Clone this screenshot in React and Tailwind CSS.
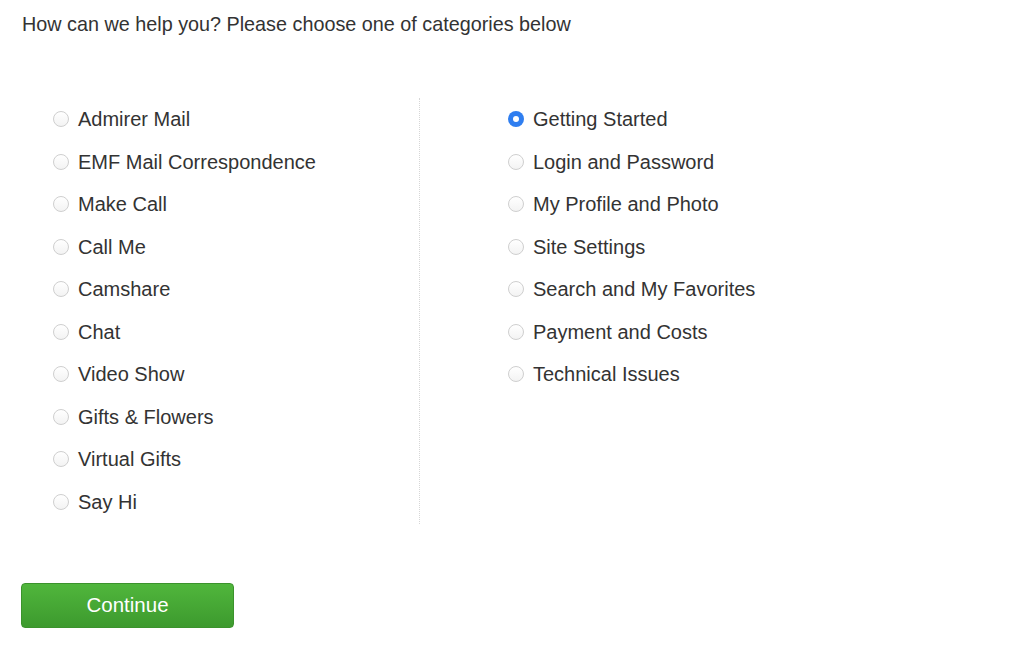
import React from "react";

const left = ["Admirer Mail","EMF Mail Correspondence","Make Call","Call Me","Camshare","Chat","Video Show","Gifts & Flowers","Virtual Gifts","Say Hi"];
const right = ["Getting Started","Login and Password","My Profile and Photo","Site Settings","Search and My Favorites","Payment and Costs","Technical Issues"];

function Radio({ checked }) {
  return checked ? (
    <span className="w-4 h-4 rounded-full bg-[#2f7ef0] flex items-center justify-center shrink-0">
      <span className="w-[6px] h-[6px] rounded-full bg-white" />
    </span>
  ) : (
    <span className="w-4 h-4 rounded-full border border-[#cfcfcf] bg-gradient-to-b from-white to-[#f3f3f3] shrink-0" />
  );
}

function Item({ label, checked }) {
  return (
    <div className="h-[42.5px] flex items-center gap-[9px]">
      <Radio checked={checked} />
      <span className="text-[20px] text-[#333]">{label}</span>
    </div>
  );
}

export default function App() {
  return (
    <div className="w-[1024px] h-[645px] bg-white pl-[22px] pt-[11px]" style={{ fontFamily: '"Liberation Sans", Arial, sans-serif' }}>
      <div className="text-[19.8px] text-[#333] leading-[26px]">How can we help you? Please choose one of categories below</div>
      <div className="flex mt-[61px]">
        <div className="w-[397px] pl-[31px]">
          {left.map((l) => <Item key={l} label={l} />)}
        </div>
        <div className="border-l border-dotted border-[#d6d6d6] h-[426px]" />
        <div className="pl-[88px]">
          {right.map((l, i) => <Item key={l} label={l} checked={i === 0} />)}
        </div>
      </div>
      <button className="mt-[59px] -ml-px w-[213px] h-[45px] rounded-[4px] border border-[#3b932c] bg-gradient-to-b from-[#50b63c] to-[#3d9a2e] text-white text-[20.5px] flex items-center justify-center">
        Continue
      </button>
    </div>
  );
}
